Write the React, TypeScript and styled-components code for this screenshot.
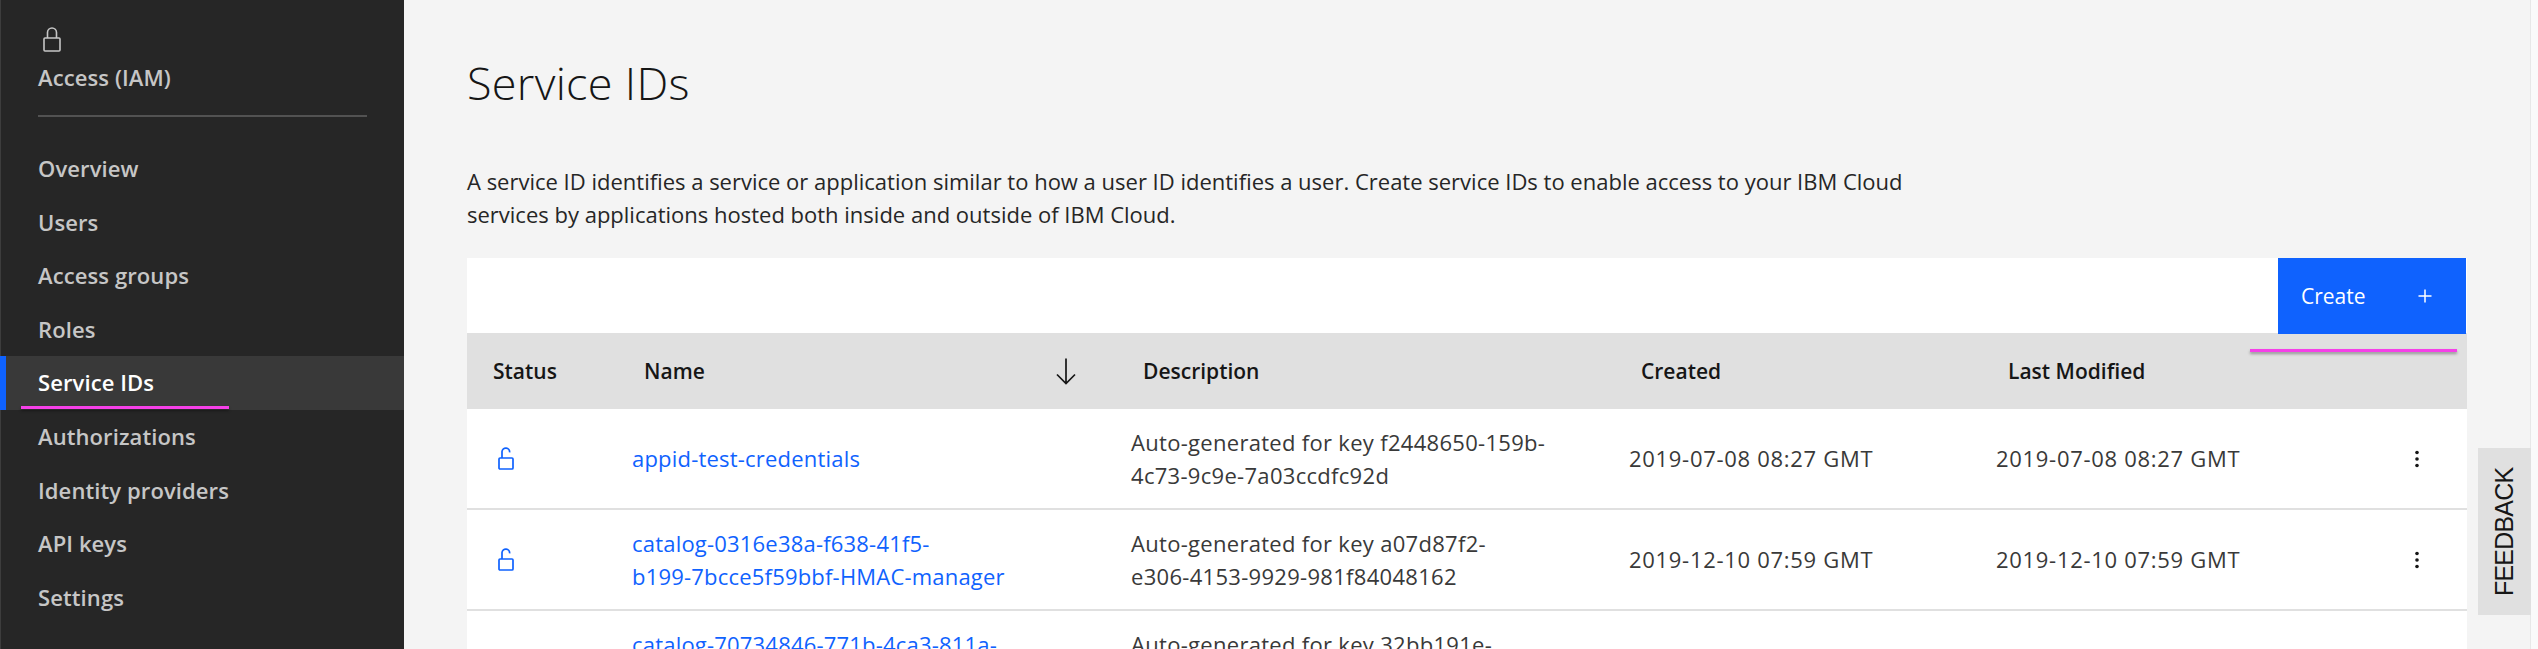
import * as React from 'react'
import styled, { createGlobalStyle } from 'styled-components'

const GlobalStyle = createGlobalStyle`
    html, body {
        margin: 0;
        height: 100%;
        overflow: hidden;
    }
    #root {
        height: 100%;
    }
`

const fontStack = `"Open Sans", "Noto Sans", sans-serif`

const Page = styled.div`
    display: flex;
    width: 2538px;
    height: 649px;
    overflow: hidden;
    background-color: #f4f4f4;
    font-family: ${fontStack};
`

const Sidebar = styled.nav`
    flex: 0 0 403px;
    height: 649px;
    background-color: #262626;
    border-left: 1px solid #3d3d3d;
    color: #c6c6c6;
    font-weight: 600;
    font-size: 22px;
    letter-spacing: 0.1px;
`

const SideHeader = styled.div`
    margin: 0 37px 25px;
    padding-top: 27px;
    height: 88px;
    border-bottom: 2px solid #525252;
`

const LockIcon = styled.svg`
    display: block;
    margin-left: 5px;
    width: 18px;
    height: 25px;
`

const SideTitle = styled.div`
    line-height: 30px;
    margin-top: 10px;
`

const NavItem = styled.div<{ $active?: boolean }>`
    position: relative;
    height: 53.6px;
    line-height: 53.6px;
    margin-left: ${(p) => (p.$active ? '-1px' : '0')};
    padding-left: ${(p) => (p.$active ? '32px' : '37px')};
    color: ${(p) => (p.$active ? '#ffffff' : '#c6c6c6')};
    background-color: ${(p) => (p.$active ? '#393939' : 'transparent')};
    border-left: ${(p) => (p.$active ? '6px solid #0f62fe' : '0')};
`

const Marker = styled.div`
    position: absolute;
    height: 3px;
    background-color: #f540e8;
    box-shadow: 0 2px 3px rgba(0, 0, 0, 0.35);
`

const NavMarker = styled(Marker)`
    left: 15px;
    bottom: 1px;
    width: 208px;
`

const CreateMarker = styled(Marker)`
    right: 10px;
    top: 91px;
    width: 207px;
`

const Main = styled.main`
    flex: 1;
    padding: 0 63px 0 63px;
`

const ScrollTrack = styled.div`
    flex: 0 0 7px;
    background-color: #fafafa;
    border-left: 1px solid #e8e8e8;
`

const Title = styled.h1`
    margin: 0;
    padding-top: 56px;
    font-size: 45px;
    line-height: 54px;
    font-weight: 300;
    letter-spacing: 0.3px;
    color: #161616;
`

const Intro = styled.p`
    margin: 55px 0 0;
    width: 1450px;
    font-size: 22px;
    line-height: 33px;
    color: #262626;
`

const TableWrap = styled.div`
    position: relative;
    margin-top: 27px;
`

const Toolbar = styled.div`
    display: flex;
    justify-content: flex-end;
    height: 75px;
    background-color: #ffffff;
`

const CreateButton = styled.button`
    display: flex;
    align-items: center;
    justify-content: space-between;
    width: 188px;
    height: 76px;
    padding: 0 34px 0 23px;
    margin-right: 1px;
    border: 0;
    background-color: #0f62fe;
    color: #ffffff;
    font-family: ${fontStack};
    font-size: 21px;
    position: relative;
    z-index: 1;
`

const columns = '165px 499px 498px 367px 1fr'

const HeaderRow = styled.div`
    display: grid;
    grid-template-columns: ${columns};
    height: 76px;
    align-items: center;
    background-color: #e0e0e0;
    color: #161616;
    font-size: 21px;
    font-weight: 600;
`

const HeaderCell = styled.div`
    display: flex;
    align-items: center;
    justify-content: space-between;
    padding: 0 55px 0 12px;
`

const StatusHeader = styled(HeaderCell)`
    padding-left: 26px;
`

const Row = styled.div`
    display: grid;
    grid-template-columns: ${columns};
    height: 99px;
    align-items: center;
    background-color: #ffffff;
    border-bottom: 2px solid #e0e0e0;
    font-size: 22px;
    line-height: 33px;
    color: #393939;
`

const StatusCell = styled.div`
    padding-left: 31px;
    display: flex;
`

const NameLink = styled.a`
    color: #0f62fe;
    display: block;
    white-space: pre-line;
    letter-spacing: 0.2px;
`

const Description = styled.div`
    white-space: pre-line;
    letter-spacing: 0.3px;
`

const DateCell = styled.div`
    white-space: nowrap;
    letter-spacing: 0.7px;
`

const LastCell = styled.div`
    display: flex;
    align-items: center;
    justify-content: space-between;
    padding-right: 47px;
    letter-spacing: 0.7px;
`

const Feedback = styled.div`
    position: absolute;
    left: 2478px;
    top: 448px;
    width: 53px;
    height: 167px;
    display: flex;
    align-items: center;
    justify-content: center;
    background-color: #e0e0e0;
    color: #161616;
    font-family: "Liberation Sans", sans-serif;
    font-size: 25px;
    letter-spacing: -0.8px;
    writing-mode: vertical-rl;
    transform: rotate(180deg);
`

const navItems = ['Overview', 'Users', 'Access groups', 'Roles', 'Service IDs', 'Authorizations', 'Identity providers', 'API keys', 'Settings']

const rows = [
    { name: 'appid-test-credentials', desc: 'Auto-generated for key f2448650-159b-\n4c73-9c9e-7a03ccdfc92d', date: '2019-07-08 08:27 GMT' },
    { name: 'catalog-0316e38a-f638-41f5-\nb199-7bcce5f59bbf-HMAC-manager', desc: 'Auto-generated for key a07d87f2-\ne306-4153-9929-981f84048162', date: '2019-12-10 07:59 GMT' },
    // second lines of this row are below the fold
    { name: 'catalog-70734846-771b-4ca3-811a-\n\u00a0', desc: 'Auto-generated for key 32bb191e-\n\u00a0', date: '' },
]

const UnlockIcon = () => (
    <svg width="16" height="23" viewBox="0 0 16 23" fill="none" stroke="#0f62fe" strokeWidth="1.7">
        <rect x="1" y="11" width="14" height="11" rx="1" />
        <path d="M4 11V4.5a3.8 3.8 0 0 1 7.6 0.8" />
    </svg>
)

const MenuIcon = () => (
    <svg width="6" height="18" viewBox="0 0 6 18" fill="#161616">
        <circle cx="3" cy="2.5" r="1.8" />
        <circle cx="3" cy="9" r="1.8" />
        <circle cx="3" cy="15.5" r="1.8" />
    </svg>
)

export default function App() {
    return (
        <Page>
            <GlobalStyle />
            <Sidebar>
                <SideHeader>
                    <LockIcon viewBox="0 0 18 25" fill="none" stroke="#c6c6c6" strokeWidth="1.6">
                        <rect x="1" y="11" width="16" height="13" rx="1" />
                        <path d="M4.5 11V5.5a4.5 4.5 0 0 1 9 0V11" />
                    </LockIcon>
                    <SideTitle>Access (IAM)</SideTitle>
                </SideHeader>
                {navItems.map((item) => (
                    <NavItem key={item} $active={item === 'Service IDs'}>
                        {item}
                        {item === 'Service IDs' && <NavMarker />}
                    </NavItem>
                ))}
            </Sidebar>
            <Main>
                <Title>Service IDs</Title>
                <Intro>
                    A service ID identifies a service or application similar to how a user ID identifies a user. Create service IDs to enable access to your IBM Cloud services by applications hosted both inside and outside of IBM Cloud.
                </Intro>
                <TableWrap>
                    <Toolbar>
                        <CreateButton>
                            Create
                            <svg width="14" height="14" viewBox="0 0 14 14" stroke="#ffffff" strokeWidth="1.5">
                                <path d="M7 0.5v13M0.5 7h13" />
                            </svg>
                        </CreateButton>
                    </Toolbar>
                    <CreateMarker />
                    <HeaderRow>
                        <StatusHeader>Status</StatusHeader>
                        <HeaderCell>
                            Name
                            <svg width="20" height="27" viewBox="0 0 20 27" fill="none" stroke="#161616" strokeWidth="1.7">
                                <path d="M10 0.5v25M1 16.5l9 9 9-9" />
                            </svg>
                        </HeaderCell>
                        <HeaderCell>Description</HeaderCell>
                        <HeaderCell>Created</HeaderCell>
                        <HeaderCell>Last Modified</HeaderCell>
                    </HeaderRow>
                    {rows.map((row, i) => (
                        <Row key={i}>
                            <StatusCell><UnlockIcon /></StatusCell>
                            <NameLink>{row.name}</NameLink>
                            <Description>{row.desc}</Description>
                            <DateCell>{row.date}</DateCell>
                            <LastCell>
                                <span>{row.date}</span>
                                {row.date && <MenuIcon />}
                            </LastCell>
                        </Row>
                    ))}
                </TableWrap>
            </Main>
            <ScrollTrack />
            <Feedback>FEEDBACK</Feedback>
        </Page>
    )
}
